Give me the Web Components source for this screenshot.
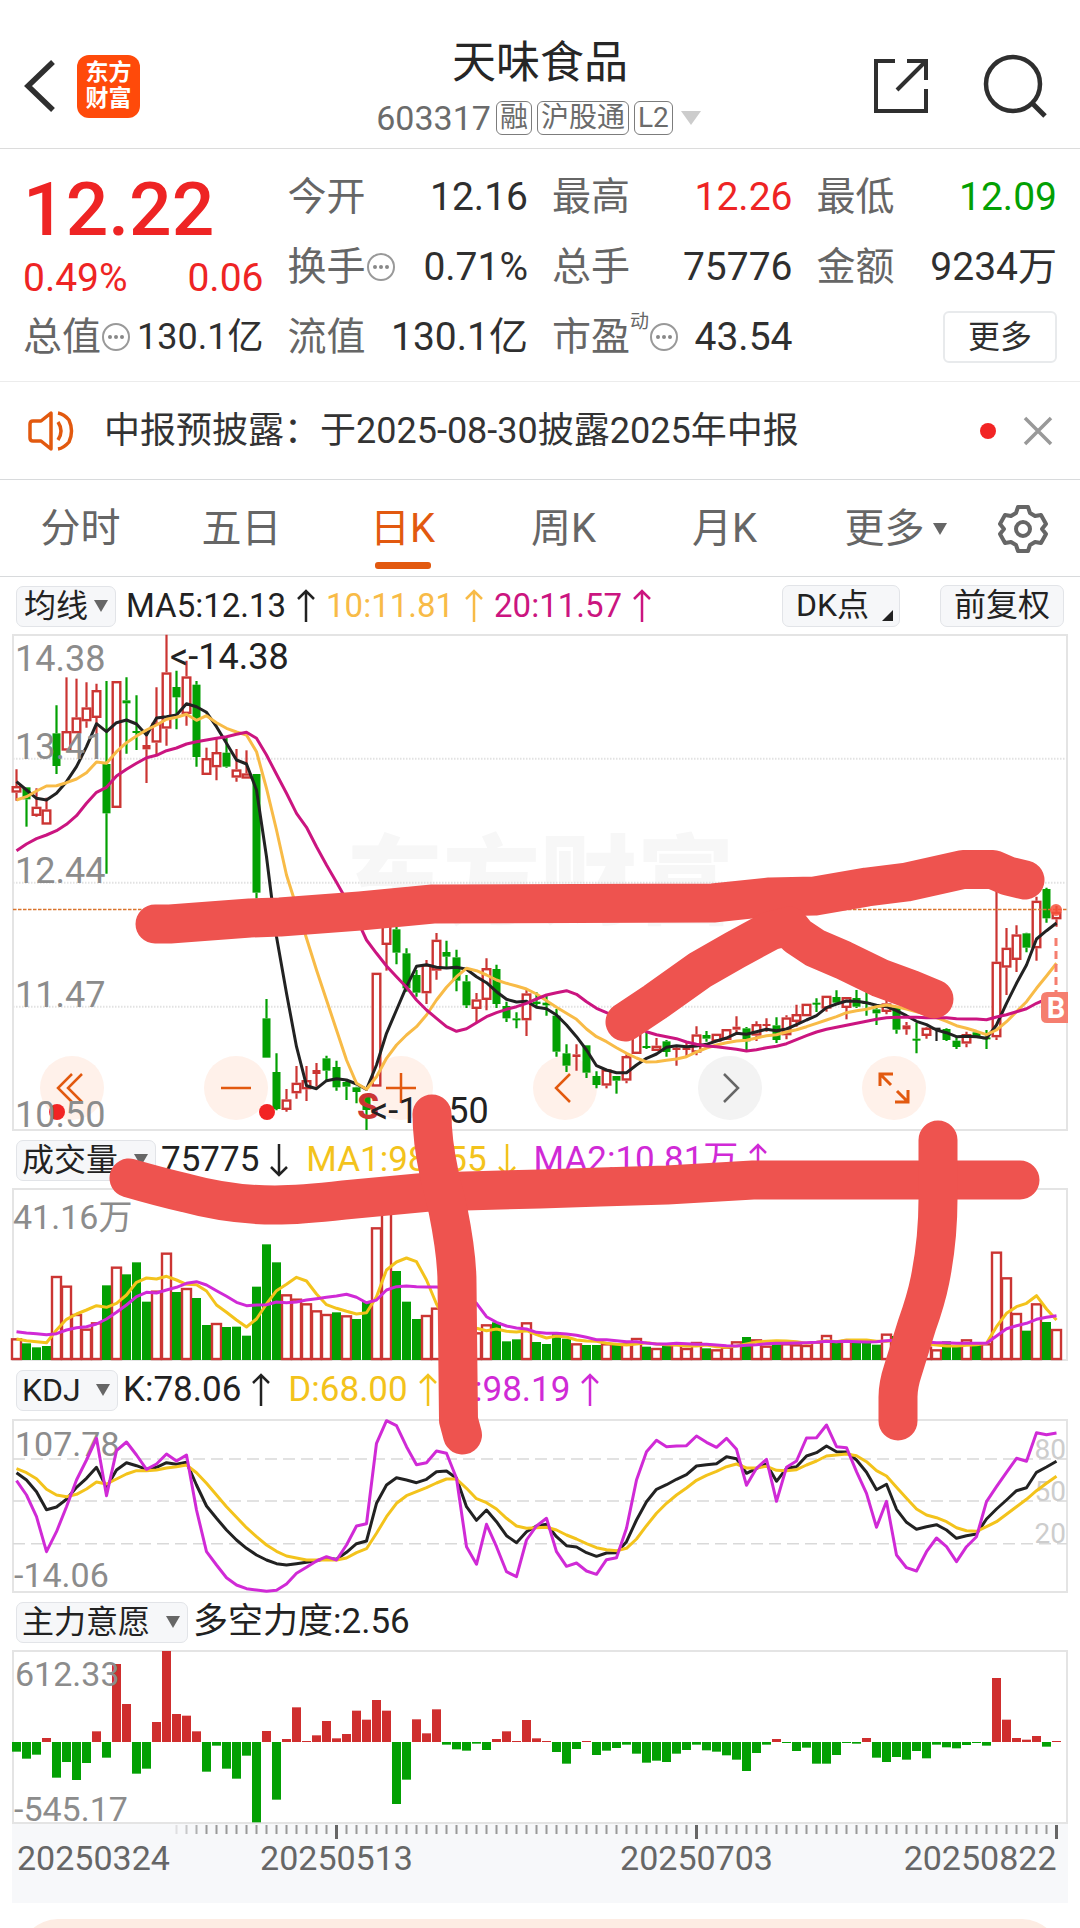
<!DOCTYPE html>
<html lang="zh-CN">
<head>
<meta charset="utf-8">
<meta name="viewport" content="width=device-width, initial-scale=1">
<title>天味食品 603317</title>
<style>
  body { margin: 0; background: #fff; color: #2b2b2b; font-family: Roboto, "Noto Sans CJK SC", sans-serif; }
</style>
</head>
<body>
<stock-page></stock-page>

<script>
const define = (name, html, setup) => {
  const tpl = document.createElement('template');
  tpl.innerHTML = html;
  customElements.define(name, class extends HTMLElement {
    constructor() {
      super();
      this.attachShadow({ mode: 'open' }).appendChild(tpl.content.cloneNode(true));
    }
    connectedCallback() { if (setup) setup(this, this.shadowRoot); }
  });
};

/* ---------- shared geometry: one trading day every 10 units ---------- */
const X = i => 16.5 + 10 * i;
const RED = '#cb3533', GREEN = '#03a003';
const scale = base => v => (base + v / 3).toFixed(1);
const line = (values, y, color) =>
  `<polyline fill="none" stroke="${color}" stroke-width="3" stroke-linejoin="round" points="${values.map((v, i) => X(i) + ',' + y(v)).join(' ')}"/>`;
const frame = (top, bottom) =>
  `<rect x="13" y="${top + 1}" width="1054" height="${bottom - top - 2}" fill="none" stroke="#e4e4e4" stroke-width="2"/>`;
const chartStyle = `<style>
  :host { display: block; position: relative; padding: 0 12px; }
  svg.plot { display: block; width: 100%; height: auto; overflow: visible; position: relative; pointer-events: none; font-family: Roboto, "Noto Sans CJK SC", sans-serif; }
  .scale { font-size: 34px; fill: #8c8c8c; }
  .level { font-size: 28px; fill: #cdcdcd; }
</style>`;

/* ---------- header ---------- */
define('app-header', `
<style>
  :host { display: flex; align-items: center; justify-content: space-between; height: 149px; box-sizing: border-box; padding: 24px 32px 0 20px; border-bottom: 1px solid #dcdcdc; position: relative; }
  .side { display: flex; align-items: center; }
  .left { gap: 17px; }
  .right { gap: 53px; }
  button { border: 0; padding: 0; background: none; display: block; color: #2f2f2f; font: inherit; }
  svg { display: block; }
  .brand { width: 63px; height: 63px; border-radius: 12px; background: #ff4a0a; color: #fff; display: flex; flex-direction: column; align-items: center; justify-content: center; font-weight: 700; font-size: 23px; line-height: 26px; }
  .middle { position: absolute; left: 0; right: 0; top: 32px; display: flex; flex-direction: column; align-items: center; pointer-events: none; }
  h1 { margin: 0; font-size: 44px; line-height: 62px; font-weight: 400; color: #262626; }
  .code { display: flex; align-items: center; gap: 5px; height: 48px; font-size: 34px; color: #6b6b6b; }
  .tag { border: 1px solid #7c7c7c; border-radius: 6px; font-size: 28px; line-height: 32px; padding: 0 3px; }
</style>
<div class="side left">
  <button aria-label="返回"><svg width="40" height="52" viewBox="0 0 40 52" fill="none" stroke="#2f2f2f" stroke-width="5.500"><path d="M33 2 8 26 33 50"/></svg></button>
  <div class="brand"><span>东方</span><span>财富</span></div>
</div>
<div class="middle">
  <h1>天味食品</h1>
  <div class="code"><span>603317</span><span class="tag">融</span><span class="tag">沪股通</span><span class="tag">L2</span>
    <svg width="26" height="16" viewBox="0 0 26 16"><path d="M3 1h20L13 15z" fill="#ccc"/></svg></div>
</div>
<div class="side right">
  <button aria-label="分享"><svg width="56" height="56" viewBox="0 0 56 56" fill="none" stroke="#2f2f2f" stroke-width="4"><path d="M22 3H3v50h50V31M34 3h19v19M52 4 24 32"/></svg></button>
  <button aria-label="搜索"><svg width="66" height="66" viewBox="0 0 66 66" fill="none" stroke="#2f2f2f" stroke-width="4.500"><circle cx="31" cy="31" r="27"/><path d="m50 50 13 13" stroke-width="5"/></svg></button>
</div>`);

/* ---------- quote ---------- */
define('quote-item', `
<style>
  :host { display: flex; align-items: center; justify-content: space-between; font-size: 39px; line-height: 50px; color: #2f2f2f; white-space: nowrap; }
  .label { display: flex; align-items: center; color: #666; }
  svg { display: none; }
  :host([hint]) svg { display: block; }
  :host([compact]) .value { font-size: 36px; }
  sup { font-size: 19px; line-height: 20px; align-self: flex-start; }
</style>
<span class="label"><slot name="label"></slot><sup><slot name="mark"></slot></sup>
<svg width="30" height="30" viewBox="0 0 30 30"><circle cx="15" cy="15" r="13" fill="none" stroke="#999" stroke-width="2"/><g fill="#888"><circle cx="9" cy="15" r="2"/><circle cx="15" cy="15" r="2"/><circle cx="21" cy="15" r="2"/></g></svg></span>
<span class="value"><slot></slot></span>`);

define('quote-panel', `
<style>
  :host { display: grid; grid-template-columns: repeat(4, 1fr); grid-auto-rows: 70px; column-gap: 24px; padding: 13px 23px 9px; border-bottom: 1px solid #ececec; }
  .last { grid-row: span 2; display: flex; flex-direction: column; color: #ee2424; padding-top: 2px; }
  .price { font-size: 75px; font-weight: 500; line-height: 90px; }
  .delta { display: flex; justify-content: space-between; font-size: 39px; line-height: 48px; }
  .up { color: #ee2424; } .down { color: #03a003; }
  button { justify-self: end; align-self: center; width: 114px; height: 52px; border: 2px solid #e8eaec; border-radius: 6px; background: #fff; color: #2f2f2f; font: 32px/44px Roboto, "Noto Sans CJK SC", sans-serif; padding: 0; }
</style>
<div class="last"><span class="price">12.22</span><div class="delta"><span>0.49%</span><span>0.06</span></div></div>
<quote-item><span slot="label">今开</span>12.16</quote-item>
<quote-item><span slot="label">最高</span><span class="up">12.26</span></quote-item>
<quote-item><span slot="label">最低</span><span class="down">12.09</span></quote-item>
<quote-item hint><span slot="label">换手</span>0.71%</quote-item>
<quote-item><span slot="label">总手</span>75776</quote-item>
<quote-item><span slot="label">金额</span>9234万</quote-item>
<quote-item hint compact><span slot="label">总值</span>130.1亿</quote-item>
<quote-item><span slot="label">流值</span>130.1亿</quote-item>
<quote-item hint><span slot="label">市盈</span><span slot="mark">动</span>43.54</quote-item>
<button>更多</button>`);

/* ---------- notice ---------- */
define('notice-bar', `
<style>
  :host { display: flex; align-items: center; height: 97px; padding: 0 27px; border-bottom: 1px solid #d8dadc; font-size: 36px; line-height: 50px; color: #333; }
  p { margin: 0 0 0 27px; flex: 1; white-space: nowrap; }
  .dot { width: 16px; height: 16px; border-radius: 50%; background: #f22424; margin-right: 27px; }
  button { border: 0; background: none; padding: 0; }
  svg { display: block; }
</style>
<svg width="50" height="44" viewBox="0 0 50 44" fill="none" stroke="#e2590f" stroke-width="3.500" stroke-linejoin="round"><path d="M24 4v36l-10-8H6q-3 0-3-3V15q0-3 3-3h8z"/><path d="M31 13q6 9 0 18M31 4q6 1 11 7 5 11 0 22-5 6-11 7"/></svg>
<p><slot></slot></p>
<span class="dot"></span>
<button aria-label="关闭"><svg width="30" height="30" viewBox="0 0 30 30" stroke="#999" stroke-width="3.500"><path d="m2 2 26 26M28 2 2 28"/></svg></button>`);

/* ---------- period tabs ---------- */
define('period-tabs', `
<style>
  :host { display: flex; height: 96px; border-bottom: 1px solid #d8dadc; }
  button { flex: 161 1 161px; box-sizing: border-box; display: flex; align-items: center; justify-content: center; gap: 8px; position: relative; border: 0; padding: 2px 0 0; background: none; font: 40px/60px Roboto, "Noto Sans CJK SC", sans-serif; color: #666; white-space: nowrap; }
  .more { padding-left: 20px; }
  .gear { flex: 114 1 114px; }
  .on { color: #e2590f; }
  .on::after { content: ""; position: absolute; bottom: 7px; width: 56px; height: 7px; border-radius: 3px; background: #e2590f; }
</style>
<button>分时</button><button>五日</button><button class="on">日K</button><button>周K</button><button>月K</button>
<button class="more">更多<svg width="14" height="14" viewBox="0 0 14 14"><path d="M0 1h14L7 13z" fill="#666"/></svg></button>
<button class="gear" aria-label="设置"><svg width="50" height="50" viewBox="0 0 50 50" fill="none" stroke="#666" stroke-width="4" stroke-linejoin="round"><path d="M20 3h10l2 6 5 3 6-1 5 9-4 5 4 5-5 9-6-1-5 3-2 6H20l-2-6-5-3-6 1-5-9 4-5-4-5 5-9 6 1 5-3z"/><circle cx="25" cy="25" r="7"/></svg></button>`);

/* ---------- indicator bars ---------- */
define('indicator-bar', `
<style>
  :host { display: flex; align-items: center; height: 58px; padding: 0 16px; gap: 5px; font-size: 35px; line-height: 50px; white-space: nowrap; color: #222; }
  label { display: grid; align-items: center; border: 1px solid #e2e4e8; border-radius: 7px; background: #f6f7f9; height: 41px; box-sizing: border-box; }
  select { grid-area: 1 / 1; appearance: none; border: 0; margin: 0; background: none; padding: 0 36px 0 5px; font: 32px/38px Roboto, "Noto Sans CJK SC", sans-serif; color: #222; }
  :host([tight]) select { padding: 0 26px 0 7px; }
  :host([tight]) { font-size: 33px; gap: 10px; }
  label svg { grid-area: 1 / 1; justify-self: end; margin-right: 7px; pointer-events: none; }
  .values { display: flex; flex: 1; gap: 8px; }
</style>
<label><select aria-label="指标"><option></option></select><svg width="14" height="12" viewBox="0 0 14 12"><path d="M0 0h14L7 12z" fill="#666"/></svg></label>
<div class="values"><slot></slot></div>
<slot name="end"></slot>`, (host, root) => { root.querySelector('option').textContent = host.getAttribute('name'); });

define('indicator-value', `
<style>
  :host { display: flex; align-items: center; gap: 11px; line-height: 50px; padding-right: 3px; }
  :host([wide]) { padding-right: 10px; }
  svg { display: block; } .down { transform: rotate(180deg); }
</style>
<span><slot></slot></span><svg width="18" height="34" viewBox="0 0 18 34" fill="none" stroke="currentColor" stroke-width="2.500"><path d="M9 33V2M1 10l8-8 8 8"/></svg>`,
(host, root) => { if (host.hasAttribute('down')) root.querySelector('svg').classList.add('down'); });

define('chip-button', `
<style>
  :host { display: block; margin-left: 30px; }
  button { display: flex; height: 42px; box-sizing: border-box; border: 1px solid #e2e4e8; border-radius: 7px; background: #f6f7f9; padding: 0 13px; font: 32px/38px Roboto, "Noto Sans CJK SC", sans-serif; color: #222; gap: 13px; }
  svg { display: none; align-self: flex-end; margin: 0 -7px 5px 0; }
  :host([corner]) svg { display: block; }
</style>
<button><slot></slot><svg width="11" height="11" viewBox="0 0 11 11"><path d="M11 0v11H0z" fill="#222"/></svg></button>`);

/* ---------- price chart ---------- */
/* r/g/k, high, body top, body bottom, low */
const candles = `r418,468,488,512 g472,472,508,590 r475,530,558,560 r503,538,584,584 g226,310,408,432 r142,303,362,362 r146,262,310,310 r157,232,274,293 r161,180,264,312 g153,402,550,731 r153,153,534,534 g142,211,220,371 g196,303,308,360 r300,345,358,459 r172,278,338,372 r14,127,296,347 g122,171,202,298 r92,139,252,287 g153,164,381,410 r353,384,435,435 r322,366,412,451 g322,368,410,413 r357,418,443,455 r361,430,446,446 g432,432,788,805 g1107,1165,1283,1283 g1270,1326,1437,1441 r1377,1408,1440,1445 r1308,1358,1390,1406 r1308,1350,1378,1413 r1299,1320,1332,1370 g1277,1285,1322,1352 g1292,1311,1372,1382 g1352,1356,1370,1410 g1370,1372,1386,1420
g1398,1398,1440,1500 r1028,1028,1370,1370 r800,800,945,1022 g880,898,968,1003 g955,970,1075,1085 g1020,1035,1088,1100 r990,1003,1090,1122 r909,929,1022,1049 g932,966,980,1013 g959,982,1052,1084 g1035,1054,1126,1134 r1089,1108,1137,1177 r985,1014,1110,1141 g1004,1017,1122,1134 g1115,1128,1165,1176 g1147,1165,1169,1195 r1076,1090,1171,1218 g1087,1115,1122,1132 g1095,1118,1126,1157 g1137,1157,1265,1280 g1243,1270,1307,1326 r1243,1273,1281,1322 g1246,1246,1328,1344 g1324,1338,1365,1375 r1318,1318,1367,1375 g1338,1338,1352,1391 r1273,1278,1352,1360 r1200,1200,1272,1272 g1205,1248,1253,1257 r1224,1247,1263,1263 g1230,1234,1266,1280 r1250,1253,1260,1307 r1238,1253,1260,1282 r1189,1213,1268,1276 g1203,1215,1226,1235 r1211,1211,1235,1235
r1197,1197,1230,1230 r1159,1190,1199,1211 g1191,1195,1234,1260 r1174,1182,1217,1233 r1165,1182,1188,1205 g1162,1186,1230,1239 r1156,1162,1216,1228 r1124,1152,1176,1190 r1121,1121,1159,1159 g1105,1118,1122,1146 r1097,1097,1136,1145 g1081,1101,1118,1125 r1101,1101,1134,1168 g1080,1104,1130,1134 g1085,1116,1122,1157 g1122,1138,1150,1185 r1110,1120,1146,1153 g1130,1132,1199,1211 r1176,1186,1198,1214 g1178,1226,1230,1270 r1191,1193,1218,1226 k1193,1193,1200,1233 g1195,1197,1230,1233 g1221,1232,1251,1257 r1205,1212,1241,1252 g1205,1207,1218,1222 g1200,1222,1226,1257 r780,995,1222,1230 r894,953,1013,1095 r886,913,990,1026 g908,910,953,967 r800,812,955,992 g773,777,865,878 r828,845,868,890`.split(/\s+/);
const ma5 = [455,480,505,510,490,455,410,350,281,305,278,270,282,315,264,260,255,221,230,247,290,340,390,402,480,680,920,1090,1250,1367,1376,1352,1346,1350,1362,1378,1305,1210,1140,1070,1009,1004,1012,1014,1012,1018,1040,1058,1085,1108,1116,1114,1132,1136,1155,1185,1220,1260,1307,1320,1328,1328,1305,1285,1272,1252,1247,1250,1248,1243,1233,1224,1210,1213,1205,1198,1202,1197,1184,1170,1157,1133,1122,1113,1114,1118,1126,1130,1142,1157,1174,1184,1200,1208,1220,1219,1220,1225,1185,1120,1060,1005,927,902,879];
const ma10 = [510,500,483,468,467,458,447,428,396,400,365,338,318,300,285,268,262,253,271,257,278,295,306,315,365,475,600,735,830,925,1020,1110,1200,1290,1360,1378,1340,1285,1245,1215,1190,1155,1110,1072,1040,1015,1022,1035,1050,1060,1068,1077,1092,1112,1132,1150,1168,1197,1220,1235,1253,1270,1284,1296,1295,1291,1287,1280,1266,1254,1245,1238,1233,1231,1224,1217,1214,1206,1199,1190,1180,1170,1160,1148,1142,1138,1130,1125,1130,1137,1145,1152,1163,1174,1187,1195,1204,1214,1200,1175,1145,1115,1075,1038,1000];
const ma20 = [662,642,626,615,602,583,557,520,487,472,438,418,400,383,376,362,354,342,335,330,325,320,313,307,325,375,433,490,550,592,650,705,757,810,865,930,970,1008,1040,1072,1110,1140,1165,1190,1204,1196,1178,1160,1148,1138,1130,1120,1107,1095,1088,1082,1093,1115,1135,1148,1160,1175,1192,1205,1214,1220,1226,1236,1243,1248,1250,1254,1258,1263,1259,1253,1249,1241,1229,1217,1206,1198,1192,1186,1180,1174,1168,1163,1162,1162,1162,1163,1163,1163,1166,1167,1167,1169,1161,1154,1145,1136,1120,1107,1095];

const drawCandle = (text, i) => {
  const y = v => 630 + v / 3, x = X(i), c = { r: RED, g: GREEN, k: '#222' }[text[0]];
  const [h, t, b, l] = text.slice(1).split(',').map(Number);
  const height = (b - t) / 3;
  const wick = `<path d="M${x} ${y(h)}V${y(t)}M${x} ${y(b)}V${y(l)}" stroke="${c}" stroke-width="2.2"/>`;
  if (text[0] === 'r' && height > 4.5)
    return wick + `<rect x="${x - 3.8}" y="${y(t) + 1.2}" width="7.600" height="${height - 2.4}" fill="#fff" stroke="${c}" stroke-width="2.4"/>`;
  return wick + `<rect x="${x - 4}" y="${y(t)}" width="8" height="${Math.max(height, 2)}" fill="${c}"/>`;
};

define('price-chart', chartStyle + `
<style>
  .tools { position: absolute; left: 40px; right: 154px; bottom: 11px; display: flex; justify-content: space-between; }
  button { width: 64px; height: 64px; border: 0; border-radius: 50%; padding: 0; background: #fff1ea; color: #e2590f; }
  button[disabled] { background: #f3f3f3; color: #666; }
  button svg { display: block; width: 64px; height: 64px; }
  .mark { position: absolute; left: 0; right: 0; top: 42%; text-align: center; color: #f7f7f7; font-size: 97px; line-height: 80px; font-weight: 900; }
  .note { font-size: 36px; fill: #222; }
  .price { font-size: 36px; fill: #8c8c8c; }
</style>
<div class="mark">东方财富</div>
<div class="tools">
  <button aria-label="最早"><svg viewBox="0 0 64 64" fill="none" stroke="currentColor" stroke-width="2.500"><path d="M32 18 18 32l14 14M42 18 28 32l14 14"/></svg></button>
  <button aria-label="缩小"><svg viewBox="0 0 64 64" stroke="currentColor" stroke-width="2.500"><path d="M17 32h30"/></svg></button>
  <button aria-label="放大"><svg viewBox="0 0 64 64" stroke="currentColor" stroke-width="2.500"><path d="M17 32h30M32 17v30"/></svg></button>
  <button aria-label="向左"><svg viewBox="0 0 64 64" fill="none" stroke="currentColor" stroke-width="2.500"><path d="M37 18 23 32l14 14"/></svg></button>
  <button aria-label="向右" disabled><svg viewBox="0 0 64 64" fill="none" stroke="currentColor" stroke-width="2.500"><path d="m26 18 14 14-14 14"/></svg></button>
  <button aria-label="全屏"><svg viewBox="0 0 64 64" fill="none" stroke="currentColor" stroke-width="3"><path d="M18 30V18h13M18 18l11 11M46 34v12H33M46 46 35 35"/></svg></button>
</div>
<svg class="plot" viewBox="12 635 1056 496"></svg>`, (host, root) => {
  const y = scale(630);
  root.querySelector('.plot').innerHTML = frame(634, 1131) +
    [758.7, 882.7, 1006.7].map(v => `<path d="M13 ${v}H1067" stroke="#e2e2e2" stroke-width="2" stroke-dasharray="1.500 1.500"/>`).join('') +
    candles.map(drawCandle).join('') + line(ma5, y, '#222') + line(ma10, y, '#f8bb47') + line(ma20, y, '#cb1580') +
    `<path d="M13 909.500H1067" stroke="#d9742c" stroke-width="1.300" stroke-dasharray="3.500 1.500"/>
     <circle cx="1056" cy="910" r="6" fill="#f7513b" opacity=".85"/>
     <path d="M1056 938V992" stroke="#f57e6f" stroke-width="3" stroke-dasharray="8 5"/>
     <path d="M1068 992v31h-21q-6 0-6-6v-19q0-6 6-6z" fill="#f57e6f"/>
     <text x="1056" y="1018" text-anchor="middle" font-size="29" font-weight="700" fill="#fff">B</text>
     <text x="357" y="1119" font-size="36" font-weight="700" fill="#cb3533">S</text>
     <circle cx="57" cy="1112" r="8" fill="#f22424"/><circle cx="267" cy="1112" r="8" fill="#f22424"/>
     <g class="price"><text x="15" y="671">14.38</text><text x="15" y="759">13.41</text><text x="15" y="883">12.44</text><text x="15" y="1007">11.47</text><text x="15" y="1127">10.50</text></g>
     <g class="note"><text x="170" y="669">&lt;-14.38</text><text x="370" y="1123">&lt;-10.50</text></g>`;
});

/* ---------- volume chart ---------- */
const volumes = 'r625 g640 g652 g648 r438 r467 r552 r596 r577 g466 r410 g433 g397 g515 r482 r368 g486 r474 g504 g585 r579 g591 g590 g617 g470 g343 g397 r493 r506 r520 r541 r552 g547 r556 g567 g515 r292 r240 g423 g515 g567 r555 r533 r580 g600 g610 r607 r583 g577 g634 g628 r577 g636 g642 g607 g626 r640 g645 g645 r640 g640 r640 r624 g650 r654 g648 r642 r654 r636 g655 r658 r650 r634 g621 r628 r647 g643 r640 r643 r645 r635 r615 g635 r630 g638 g638 g644 r611 g618 r645 r645 r650 r658 g634 g650 r628 g645 r640 r365 r442 r549 g602 r520 g576 r597'.split(' ');
const vma1 = [627,632,635,638,600,568,552,540,527,532,520,495,457,444,447,439,450,463,464,483,525,547,570,591,567,522,482,463,442,453,492,524,535,544,552,548,500,420,396,384,395,450,522,575,590,595,595,602,597,604,606,602,614,624,618,621,630,633,634,640,643,645,642,638,642,644,645,648,648,645,650,652,648,642,636,634,632,633,635,640,637,632,635,630,630,630,634,634,630,630,635,642,645,648,648,646,644,640,590,550,530,520,497,537,570];
const vma2 = [605,609,611,614,611,600,593,590,582,567,547,525,500,487,489,480,472,460,455,465,482,499,517,527,525,524,516,518,516,510,506,502,498,493,502,518,510,480,470,468,470,471,471,475,485,500,520,560,577,588,594,597,607,610,610,612,616,622,629,629,632,635,635,639,642,642,640,641,643,643,645,647,648,646,644,641,640,640,639,638,637,634,635,634,635,636,635,632,631,632,634,636,638,638,640,640,640,640,618,596,587,580,568,562,557];
define('volume-chart', chartStyle + `<svg class="plot" viewBox="12 1189 1056 172"></svg>`, (host, root) => {
  const y = scale(1130);
  root.querySelector('svg').innerHTML = frame(1188, 1361) +
    volumes.map((d, i) => {
      const top = 1130 + d.slice(1) / 3, h = 1360 - top;
      return d[0] === 'g' ? `<rect x="${X(i) - 4.5}" y="${top}" width="9" height="${h}" fill="${GREEN}"/>`
        : `<rect x="${X(i) - 4.5}" y="${top + 1}" width="9" height="${h - 2}" fill="#fff" stroke="${RED}" stroke-width="2.4"/>`;
    }).join('') + line(vma1, y, '#f3c31c') + line(vma2, y, '#d02ad6') +
    '<text class="scale" x="13" y="1229">41.16万</text>';
});

/* ---------- KDJ chart ---------- */
const jLine = [242,285,350,455,395,320,240,180,115,287,152,126,165,208,192,162,183,165,330,455,495,533,555,566,570,574,571,552,520,502,483,470,480,435,378,371,130,62,77,140,194,188,153,160,235,440,493,373,440,515,530,420,378,355,455,499,489,513,523,479,473,385,240,155,121,140,138,137,108,127,142,115,148,256,205,178,304,202,183,114,113,75,140,143,215,280,382,304,465,503,513,455,414,440,485,440,410,305,260,217,175,184,98,104,99];
const kLine = [218,240,275,329,321,298,262,235,202,262,210,188,197,208,202,188,193,187,255,318,355,390,420,445,465,480,491,495,491,487,482,475,478,457,431,423,310,255,233,240,248,238,215,213,235,320,361,330,365,407,428,395,378,373,410,437,441,458,469,459,458,425,360,305,268,254,238,224,198,194,191,170,176,220,205,192,244,205,200,168,158,138,155,156,180,217,269,253,328,367,388,380,374,390,415,407,402,357,327,300,272,263,217,201,184];
const dLine = [206,218,236,268,285,290,283,267,246,252,237,222,212,212,210,204,200,195,218,250,285,320,352,383,410,435,454,468,474,480,480,479,480,474,458,446,400,350,310,287,275,263,249,237,237,265,296,308,327,355,378,385,383,382,390,405,417,431,443,449,452,445,417,377,340,310,285,264,241,226,214,200,192,204,204,199,211,212,209,195,183,168,165,162,167,185,212,228,262,295,327,345,353,365,383,392,394,380,365,343,320,298,272,250,229];
define('kdj-chart', chartStyle + `<svg class="plot" viewBox="12 1419 1056 174"></svg>`, (host, root) => {
  const y = scale(1400);
  root.querySelector('svg').innerHTML = frame(1419, 1593) +
    [1459, 1501, 1543.7].map(v => `<path d="M13 ${v}H1067" stroke="#d9d9d9" stroke-width="1.500" stroke-dasharray="12 6"/>`).join('') +
    `<g class="scale"><text x="15" y="1456">107.78</text><text x="14" y="1587">-14.06</text></g>
     <g class="level" text-anchor="end"><text x="1066" y="1459">80</text><text x="1066" y="1501">50</text><text x="1066" y="1543">20</text></g>` +
    line(kLine, y, '#222') + line(dLine, y, '#f3c31c') + line(jLine, y, '#d02ad6');
});

/* ---------- force chart with its time axis ---------- */
const force = [455,476,464,414,533,486,540,489,394,473,192,312,521,506,366,153,342,347,394,515,437,506,536,467,667,393,599,417,322,423,406,363,415,402,332,359,300,332,612,539,358,400,328,434,448,452,431,450,417,394,423,360,415,423,456,491,447,423,465,452,444,434,461,488,482,486,461,450,434,451,455,466,479,513,459,434,417,429,453,443,491,491,465,429,431,414,473,486,471,479,453,475,434,442,445,435,429,437,234,359,414,419,408,440,423];
define('force-chart', chartStyle + `<svg class="plot" viewBox="12 1651 1056 173"></svg>`, (host, root) => {
  root.querySelector('svg').innerHTML = frame(1650, 1824) +
    force.map((v, i) => {
      const end = 1600 + v / 3, up = v < 426;
      return `<rect x="${X(i) - 4.5}" y="${up ? end : 1742}" width="9" height="${Math.abs(1742 - end)}" fill="${up ? '#cf2e2e' : GREEN}"/>`;
    }).join('') +
    '<g class="scale"><text x="15" y="1686">612.33</text><text x="14" y="1821">-545.17</text></g>';
});

define('time-axis', chartStyle + `
<style>.plot { background: #f7f8fa; } text { font-size: 34px; fill: #666; }</style>
<svg class="plot" viewBox="12 1824 1056 79"></svg>`, (host, root) => {
  let ticks = '';
  for (let i = 16; i <= 104; i++) {
    const major = i === 32 || i === 68 || i === 104;
    ticks += `<path d="M${X(i)} 1825V${major ? 1839 : 1834}" stroke="${major ? '#666' : '#999'}" stroke-width="${major ? 3 : 2}" opacity="${Math.min(1, (i - 15) / 4)}"/>`;
  }
  root.querySelector('svg').innerHTML = ticks +
    '<text x="17" y="1870">20250324</text><text x="336.500" y="1870" text-anchor="middle">20250513</text><text x="696.500" y="1870" text-anchor="middle">20250703</text><text x="1056.500" y="1870" text-anchor="end">20250822</text>';
});

/* ---------- hand-drawn marks over the charts ---------- */
define('marker-layer', `
<style>:host { display: block; position: absolute; inset: 0; pointer-events: none; overflow: hidden; } svg { display: block; width: 100%; height: auto; }</style>
<svg viewBox="0 577 1080 1326" fill="none" stroke="#ee534f" stroke-width="39" stroke-linecap="round" stroke-linejoin="round">
<path d="M155 924 170 924 250 918 280 917 360 911 433 904 713 903 770 897 815 896 867 887 907 882 963 869.500 993 869.500 1008 876 1025 880"/>
<path d="M625 1022 655 1002 700 970 735 950 770 931 789 926 797 936 815 948 843 960 880 978 910 989 934 999"/>
<path d="M129 1178Q160 1187 186 1193 230 1205 275 1205 300 1205 344 1200L429 1192 540 1189 600 1187 667 1185 753 1180H1020"/>
<path d="M432 1114Q432 1140 439 1173L448 1210Q457 1255 457 1283L458.500 1420 462.500 1435"/>
<path d="M938 1140V1199Q938 1240 930 1280 926 1300 917 1325L903 1370Q898 1385 898 1397V1421"/>
</svg>`);

define('stock-page', `
<style>
  :host { display: block; background: #fff; overflow: hidden; }
  .charts { position: relative; }
  .black { color: #222; } .gold { color: #f8bb47; } .pink { color: #cb1580; } .yellow { color: #f3c31c; } .violet { color: #d02ad6; }
  .sheet { height: 9px; margin: 16px 20px 0; overflow: hidden; }
  .sheet div { height: 80px; border-radius: 38px; background: #fdece3; }
</style>
<app-header></app-header>
<quote-panel></quote-panel>
<notice-bar>中报预披露：于2025-08-30披露2025年中报</notice-bar>
<period-tabs></period-tabs>
<div class="charts">
  <indicator-bar name="均线" tight>
    <indicator-value class="black">MA5:12.13</indicator-value><indicator-value class="gold">10:11.81</indicator-value><indicator-value class="pink">20:11.57</indicator-value>
    <chip-button slot="end" corner>DK点</chip-button><chip-button slot="end">前复权</chip-button>
  </indicator-bar>
  <price-chart></price-chart>
  <indicator-bar name="成交量">
    <indicator-value class="black" wide down>75775</indicator-value><indicator-value class="yellow" wide down>MA1:98155</indicator-value><indicator-value class="violet">MA2:10.81万</indicator-value>
  </indicator-bar>
  <volume-chart></volume-chart>
  <indicator-bar name="KDJ">
    <indicator-value class="black" wide>K:78.06</indicator-value><indicator-value class="yellow" wide>D:68.00</indicator-value><indicator-value class="violet">J:98.19</indicator-value>
  </indicator-bar>
  <kdj-chart></kdj-chart>
  <indicator-bar name="主力意愿"><span class="black">多空力度:2.56</span></indicator-bar>
  <force-chart></force-chart>
  <time-axis></time-axis>
  <marker-layer></marker-layer>
</div>
<div class="sheet"><div></div></div>`);
</script>
</body>
</html>
